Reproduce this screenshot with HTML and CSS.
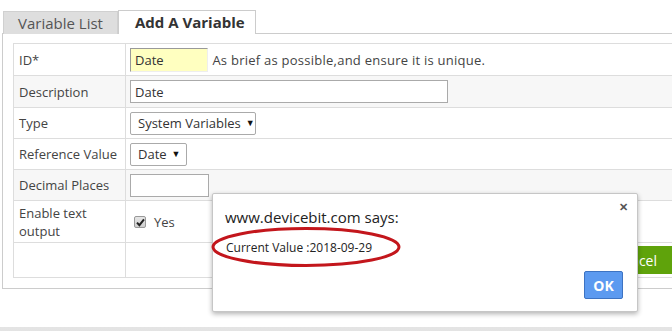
FILE: index.html
```html
<!DOCTYPE html>
<html lang="en">
<head>
  <meta charset="UTF-8" />
  <title>Add A Variable</title>
  <link rel="stylesheet" href="styles.css">
</head>
<body>

  <div class="page">

    <!-- Tabs -->
    <div class="tabs">
      <div class="tab">Variable List</div>
      <div class="tab active">Add A Variable</div>
    </div>

    <div class="panel">
      <table class="form">
        <tr>
          <th>ID*</th>
          <td>
            <input type="text" class="field id-field" value="Date">
            <span class="hint">As brief as possible,and ensure it is unique.</span>
          </td>
        </tr>
        <tr class="alt">
          <th>Description</th>
          <td><input type="text" class="field desc-field" value="Date"></td>
        </tr>
        <tr>
          <th>Type</th>
          <td><span class="select type-select">System Variables</span></td>
        </tr>
        <tr>
          <th>Reference Value</th>
          <td><span class="select ref-select">Date</span></td>
        </tr>
        <tr class="alt">
          <th>Decimal Places</th>
          <td><input type="text" class="field dec-field" value=""></td>
        </tr>
        <tr class="tall">
          <th>Enable text<br>output</th>
          <td>
            <label class="check">
              <span class="box">
                <svg width="9" height="9" viewBox="0 0 9 9"><path d="M1 4.6 L3.4 7.2 L8 1.4" fill="none" stroke="#222" stroke-width="2"/></svg>
              </span>
              Yes
            </label>
          </td>
        </tr>
        <tr class="buttons">
          <th></th>
          <td>
            <button class="green-btn">Save</button>
            <button class="green-btn">Cancel</button>
          </td>
        </tr>
      </table>
    </div>

    <!-- Alert dialog -->
    <div class="dialog">
      <span class="close">&#x2715;</span>
      <div class="dialog-title">www.devicebit.com says:</div>
      <div class="dialog-msg">Current Value :2018-09-29</div>
      <svg class="mark" width="194" height="44" viewBox="0 0 194 44">
        <ellipse cx="96" cy="21" rx="93" ry="18.5" fill="none" stroke="#c3161c" stroke-width="3"/>
      </svg>
      <div class="dialog-foot">
        <button class="ok-btn">OK</button>
      </div>
    </div>

  </div>

</body>
</html>
```

FILE: styles.css
```css
* {
  box-sizing: border-box;
}

body {
  margin: 0;
  background: linear-gradient(#e4e4e4, #b9b9b9);
  font-family: 'Open Sans', 'Liberation Sans', sans-serif;
  font-size: 13px;
  color: #444;
  overflow: hidden;
}

.page {
  position: relative;
  height: 327px;
  background: #fff;
  overflow: hidden;
  padding-top: 10px;
  box-shadow: 0 1px 2px rgba(0, 0, 0, 0.25);
}

/* Tabs */
.tabs {
  display: flex;
  align-items: flex-end;
  padding-left: 3px;
  height: 24px;
  position: relative;
  z-index: 1;
}

.tab {
  height: 23px;
  width: 115px;
  padding-left: 14px;
  font-size: 15px;
  line-height: 22px;
  color: #555;
  background: #dedede;
  border: 1px solid #d0d0d0;
  border-bottom: none;
  white-space: nowrap;
}

.tab.active {
  width: 138px;
  height: 24px;
  padding-left: 16px;
  background: #fff;
  color: #333;
  font-weight: bold;
  border-color: #ccc;
}

.panel {
  width: 760px;
  margin: -1px 0 0 2px;
  border: 1px solid #ccc;
  padding: 9px 0 10px 10px;
}

/* Form table */
.form {
  width: 740px;
  border-collapse: collapse;
}

.form th,
.form td {
  border: 1px solid #ddd;
  padding: 0 0 0 4px;
  height: 31px;
  text-align: left;
  vertical-align: middle;
  white-space: nowrap;
}

.form th {
  width: 112px;
  padding-left: 5px;
  font-weight: normal;
  line-height: 18px;
}

.form tr:first-child th,
.form tr:first-child td {
  height: 32px;
}

.form tr:nth-child(2) th,
.form tr:nth-child(2) td {
  height: 32px;
}

.form tr.alt td,
.form tr.alt th {
  background: #f7f7f7;
}

.form tr.tall th,
.form tr.tall td {
  height: 42px;
}

.form tr.buttons th,
.form tr.buttons td {
  height: 35px;
}

.form tr.buttons td {
  padding-left: 380px;
}

.field {
  font-family: inherit;
  font-size: 13px;
  color: #333;
  height: 23px;
  padding: 0 4px;
  border: 1px solid #aaa;
  background: #fff;
  vertical-align: middle;
}

.field:focus {
  outline: none;
}

.id-field {
  width: 78px;
  height: 24px;
  background: #ffffc0;
  border-color: #999 #eee #eee #999;
}

.desc-field {
  width: 318px;
}

.dec-field {
  width: 79px;
}

.hint {
  margin-left: 1px;
  vertical-align: middle;
  letter-spacing: 0.25px;
}

.select {
  display: inline-block;
  height: 23px;
  line-height: 21px;
  padding-left: 7px;
  border: 1px solid #aaa;
  border-radius: 2px;
  color: #333;
  background: #fff;
  vertical-align: middle;
  white-space: nowrap;
}

.select::after {
  content: "\25BC";
  font-size: 9px;
  margin-left: 5px;
  color: #111;
  position: relative;
  top: -2px;
}

.type-select {
  width: 126px;
}

.ref-select {
  width: 57px;
}

.check {
  display: flex;
  align-items: center;
  gap: 8px;
  padding-left: 4px;
  padding-top: 1px;
}

.box {
  display: flex;
  align-items: center;
  justify-content: center;
  width: 12px;
  height: 12px;
  border: 1px solid #999;
  border-radius: 2px;
  background: linear-gradient(#e6e6e6, #cfcfcf);
}

.green-btn {
  font-family: inherit;
  font-size: 14px;
  color: #fff;
  background: #5fa30b;
  border: none;
  height: 28px;
  width: 80px;
  margin-right: 6px;
  vertical-align: middle;
}

/* Dialog */
.dialog {
  position: absolute;
  left: 212px;
  top: 193px;
  width: 426px;
  height: 119px;
  background: #fff;
  border: 1px solid #c6c6c6;
  border-radius: 2px;
  box-shadow: 0 2px 5px rgba(0, 0, 0, 0.3);
  padding: 12px 14px 0 12px;
  color: #222;
  z-index: 2;
}

.close {
  position: absolute;
  top: 5px;
  right: 9px;
  font-size: 11px;
  font-weight: bold;
  color: #555;
}

.dialog-title {
  font-size: 15px;
  line-height: 22px;
}

.dialog-msg {
  font-size: 12px;
  margin-top: 11px;
  line-height: 18px;
  padding-left: 1px;
}

.mark {
  position: absolute;
  left: -3px;
  top: 32px;
}

.dialog-foot {
  display: flex;
  justify-content: flex-end;
  margin-top: 14px;
}

.ok-btn {
  width: 39px;
  height: 28px;
  font-family: inherit;
  font-weight: bold;
  font-size: 14px;
  color: #fff;
  background: #5c9af0;
  border: 1px solid #3d73c2;
  border-radius: 2px;
}
```
